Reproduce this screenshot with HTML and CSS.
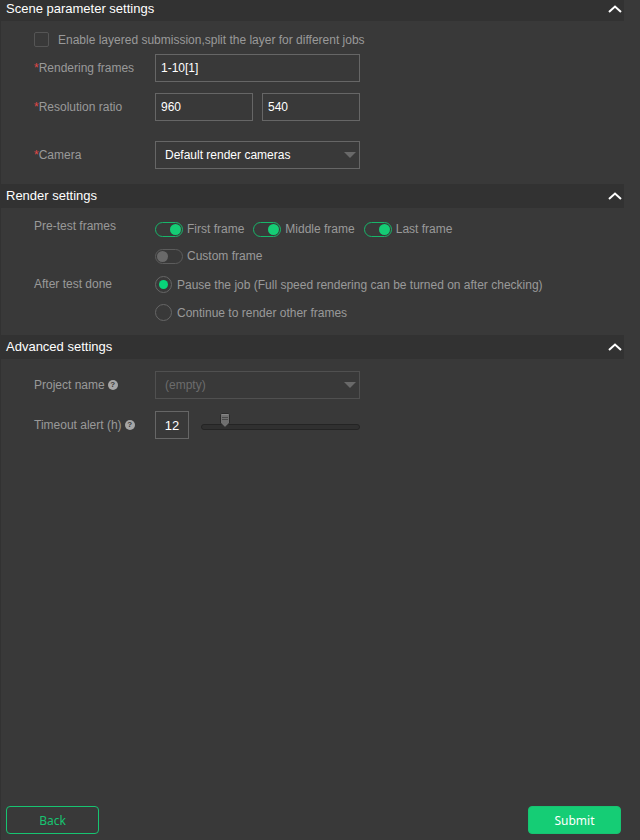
FILE: index.html
```html
<!DOCTYPE html>
<html lang="en">
<head>
<meta charset="utf-8">
<title>Job settings</title>
<link rel="stylesheet" href="styles.css">
</head>
<body>
<form class="page">
  <section>
    <h2 class="head">Scene parameter settings
      <button type="button" class="fold" aria-label="Collapse scene parameter settings"><svg width="14" height="8" viewBox="0 0 14 8"><path d="M1 7 7 1.5 13 7"/></svg></button>
    </h2>
    <div class="body scene">
      <label class="layered"><input type="checkbox" class="check"><span>Enable layered submission,split the layer for different jobs</span></label>
      <div class="row">
        <label class="name" for="frames"><span class="req">*</span>Rendering frames</label>
        <div class="field"><input id="frames" class="text" type="text" value="1-10[1]"></div>
      </div>
      <div class="row">
        <label class="name" for="width"><span class="req">*</span>Resolution ratio</label>
        <div class="field"><input id="width" class="text" type="text" value="960"><input class="text" type="text" value="540" aria-label="Height"></div>
      </div>
      <div class="row camera">
        <label class="name" for="camera"><span class="req">*</span>Camera</label>
        <div class="field"><select id="camera" class="text select"><option>Default render cameras</option></select></div>
      </div>
    </div>
  </section>

  <section>
    <h2 class="head">Render settings
      <button type="button" class="fold" aria-label="Collapse render settings"><svg width="14" height="8" viewBox="0 0 14 8"><path d="M1 7 7 1.5 13 7"/></svg></button>
    </h2>
    <div class="body render">
      <div class="row top" role="group" aria-labelledby="pretest">
        <span class="name" id="pretest">Pre-test frames</span>
        <div class="options toggles">
          <div class="line">
            <label class="option"><input type="checkbox" class="toggle" checked>First frame</label>
            <label class="option"><input type="checkbox" class="toggle" checked>Middle frame</label>
            <label class="option"><input type="checkbox" class="toggle" checked>Last frame</label>
          </div>
          <label class="option"><input type="checkbox" class="toggle">Custom frame</label>
        </div>
      </div>
      <div class="row top" role="radiogroup" aria-labelledby="after">
        <span class="name" id="after">After test done</span>
        <div class="options radios">
          <label class="option"><input type="radio" class="radio" name="after" checked><span>Pause the job (Full speed rendering can be turned on after checking)</span></label>
          <label class="option"><input type="radio" class="radio" name="after"><span>Continue to render other frames</span></label>
        </div>
      </div>
    </div>
  </section>

  <section>
    <h2 class="head">Advanced settings
      <button type="button" class="fold" aria-label="Collapse advanced settings"><svg width="14" height="8" viewBox="0 0 14 8"><path d="M1 7 7 1.5 13 7"/></svg></button>
    </h2>
    <div class="body advanced">
      <div class="row">
        <label class="name" for="project">Project name<span class="help">?</span></label>
        <div class="field"><select id="project" class="text select empty"><option>(empty)</option></select></div>
      </div>
      <div class="row">
        <label class="name" for="timeout">Timeout alert (h)<span class="help">?</span></label>
        <div class="field"><input id="timeout" class="text hours" type="text" value="12"><input class="range" type="range" min="0" max="96" value="12" aria-label="Timeout in hours"></div>
      </div>
    </div>
  </section>

  <footer class="foot">
    <button type="button" class="btn">Back</button>
    <button type="submit" class="btn primary">Submit</button>
  </footer>
</form>
</body>
</html>
```
FILE: styles.css
```css
* {
  box-sizing: border-box;
}

body {
  margin: 0;
  background: #393939;
  color: #999;
  font: 12px/16px "Liberation Sans", sans-serif;
}

input,
select,
button {
  margin: 0;
  font: inherit;
}

.page {
  display: flex;
  flex-direction: column;
  min-height: 100vh;
  border-left: 1px solid #323232;
}

.head {
  display: flex;
  align-items: center;
  justify-content: space-between;
  height: 24px;
  margin: 0 16px 0 0;
  padding: 0 2px 0 5px;
  background: #323232;
  color: #fff;
  font-size: 13px;
  font-weight: normal;
}

section:first-child .head {
  height: 21px;
  padding-bottom: 3px;
}

.fold {
  display: flex;
  padding: 0;
  border: 0;
  background: none;
}

.fold path {
  fill: none;
  stroke: #fff;
  stroke-width: 2;
}

.body {
  display: flex;
  flex-direction: column;
  padding: 0 16px 0 33px;
}

.scene {
  gap: 11px;
  padding-top: 11px;
  padding-bottom: 15px;
}

.layered {
  display: flex;
  align-items: center;
  gap: 9px;
  height: 15px;
  margin-bottom: -4px;
}

.check {
  appearance: none;
  width: 15px;
  height: 15px;
  border: 1px solid #555;
  border-radius: 2px;
}

.row {
  display: flex;
  align-items: center;
}

.row.top {
  align-items: flex-start;
}

.camera {
  margin-top: 9px;
}

.name {
  display: flex;
  align-items: center;
  flex: 0 0 121px;
}

.req {
  color: #e04848;
}

.field {
  display: flex;
  gap: 9px;
  flex: 0 1 205px;
  min-width: 0;
}

.text {
  flex: 1 1 0;
  min-width: 0;
  height: 28px;
  padding: 0 5px;
  border: 1px solid #666;
  border-radius: 0;
  background: #393939;
  color: #fff;
}

.select {
  appearance: none;
  padding: 0 9px;
  background: #393939 url("data:image/svg+xml,%3Csvg xmlns='http://www.w3.org/2000/svg' width='12' height='6'%3E%3Cpath d='M0 0h12L6 6z' fill='%23696969'/%3E%3C/svg%3E") no-repeat right 3px center;
}

.empty {
  border-color: #505050;
  color: #6c6c6c;
}

.render {
  gap: 12px;
  padding-top: 10px;
  padding-bottom: 14px;
}

.options {
  display: flex;
  flex-direction: column;
  align-items: flex-start;
}

.toggles {
  gap: 11px;
  padding-top: 3px;
}

.line {
  display: flex;
  gap: 9px;
}

.option {
  display: flex;
  align-items: center;
  gap: 4px;
}

.toggle {
  appearance: none;
  display: flex;
  align-items: center;
  width: 28px;
  height: 15px;
  padding: 0 1px;
  border: 1px solid #5c5c5c;
  border-radius: 8px;
}

.toggle::before {
  content: "";
  width: 11px;
  height: 11px;
  border-radius: 50%;
  background: #696969;
}

.toggle:checked {
  justify-content: flex-end;
  border-color: #18b56a;
}

.toggle:checked::before {
  background: #15cd75;
}

.radios {
  gap: 11px;
}

.radios .option {
  gap: 5px;
}

.radio {
  appearance: none;
  display: grid;
  place-items: center;
  width: 17px;
  height: 17px;
  border: 1px solid #666;
  border-radius: 50%;
}

.radio:checked::before {
  content: "";
  width: 9px;
  height: 9px;
  border-radius: 50%;
  background: #08d47a;
}

.advanced {
  gap: 12px;
  padding-top: 12px;
}

.help {
  width: 10px;
  height: 10px;
  margin-left: 3px;
  border-radius: 50%;
  background: #a6a6a6;
  color: #393939;
  font-size: 8px;
  font-weight: bold;
  line-height: 10px;
  text-align: center;
}

.text.hours {
  flex: 0 0 34px;
  margin-right: 3px;
  font-size: 13px;
  text-align: center;
}

.range {
  appearance: none;
  flex: 1 1 0;
  min-width: 0;
  height: 28px;
  background: none;
}

.range::-webkit-slider-runnable-track {
  height: 6px;
  margin-top: 4px;
  border: 1px solid #242424;
  border-radius: 3px;
  background: #303030;
}

.range::-webkit-slider-thumb {
  appearance: none;
  width: 10px;
  height: 15px;
  margin-top: -12px;
  background: url("data:image/svg+xml,%3Csvg xmlns='http://www.w3.org/2000/svg' width='10' height='15'%3E%3Cpath d='M1.5.5h7l1 1v8.500L5 14.500.5 10V1.500z' fill='%23707070' stroke='%232a2a2a'/%3E%3Cpath d='M2.500 4.500h5M2.500 6.500h5' stroke='%23222' stroke-dasharray='1 1'/%3E%3Cpath d='M2 1.500h6' stroke='%23858585'/%3E%3C/svg%3E");
}

.foot {
  display: flex;
  justify-content: space-between;
  margin-top: auto;
  padding: 6px 19px 6px 5px;
}

.btn {
  width: 93px;
  height: 28px;
  padding: 2px 0 0;
  border: 1px solid #17c471;
  border-radius: 4px;
  background: none;
  color: #17c471;
  font-family: "Noto Sans", sans-serif;
}

.primary {
  background: #15cd75;
  color: #fff;
}
```
